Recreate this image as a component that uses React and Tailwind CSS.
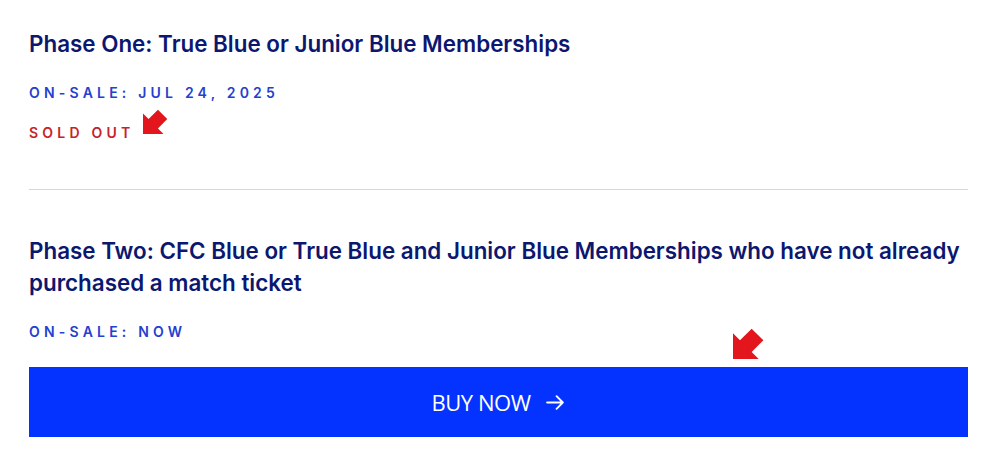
const RedArrow = ({ className }) => (
  <svg viewBox="0 0 30 30" className={className}>
    <polygon points="0,30 0,8 6,14 16,4 26,14 16,24 22,30" fill="#e3161e" />
  </svg>
);

export default function App() {
  return (
    <div className="relative w-[1000px] h-[463px] bg-white pt-[28px] pl-[29px] pr-[32px] font-['Inter',sans-serif]">
      <h2 className="text-[22.4px] leading-[32px] font-semibold text-[#0c1770]">
        Phase One: True Blue or Junior Blue Memberships
      </h2>
      <p className="mt-[23px] text-[14px] leading-[20px] font-semibold tracking-[0.3em] text-[#2440cf]">
        ON-SALE: JUL 24, 2025
      </p>
      <p className="mt-[20px] text-[14px] leading-[20px] font-semibold tracking-[0.3em] text-[#c62229]">
        SOLD OUT
      </p>
      <div className="mt-[46px] border-t border-[#d6d6d6]" />
      <h2 className="mt-[45px] text-[22.4px] leading-[32px] font-semibold text-[#0c1770]">
        Phase Two: CFC Blue or True Blue and Junior Blue Memberships who have not already purchased a match ticket
      </h2>
      <p className="mt-[23px] text-[14px] leading-[20px] font-semibold tracking-[0.3em] text-[#2440cf]">
        ON-SALE: NOW
      </p>
      <button className="mt-[25px] w-full h-[70px] bg-[#0433ff] text-white flex items-center justify-center gap-[14px] text-[22px] font-['Open_Sans',sans-serif] tracking-[-0.02em]">
        <span>BUY NOW</span>
        <svg viewBox="0 0 20 20" className="w-[21px] h-[21px]" fill="none" stroke="white" strokeWidth="1.8" strokeLinecap="round" strokeLinejoin="round">
          <path d="M2 10h15M11 4l6 6-6 6" />
        </svg>
      </button>

      <RedArrow className="absolute left-[143px] top-[106px] w-[28px] h-[28px]" />
      <RedArrow className="absolute left-[733px] top-[324px] w-[35px] h-[35px]" />
    </div>
  );
}
